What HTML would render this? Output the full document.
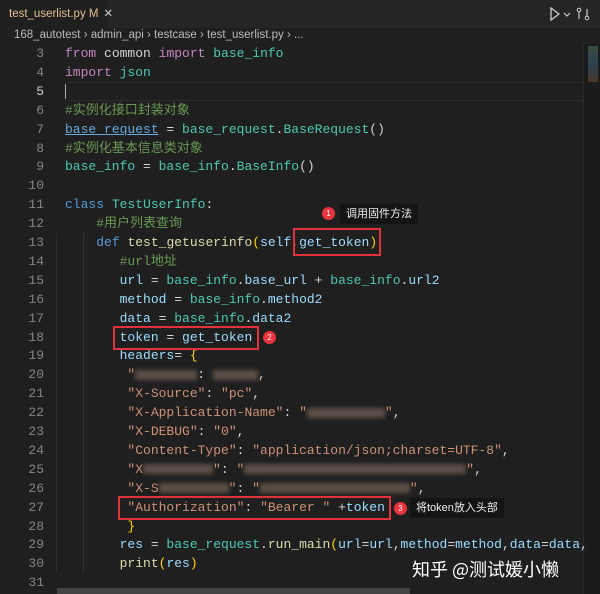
<!DOCTYPE html>
<html><head><meta charset="utf-8"><style>
*{margin:0;padding:0;box-sizing:border-box}
body{width:600px;height:594px;background:#1f1f1f;overflow:hidden;position:relative;font-family:"Liberation Sans","Noto Sans CJK SC",sans-serif}
.tabbar{position:absolute;left:0;top:0;width:600px;height:28px;background:#252526}
.tab{position:absolute;left:0;top:0;width:108px;height:28px;background:#1f1f1f;color:#e2c08d;font-size:11.5px;line-height:28px;padding-left:9px;white-space:nowrap}
.tab .x{color:#ccc;margin-left:5px}
.bc{position:absolute;left:14px;top:29px;color:#bbb;font-size:11.5px}
.code{position:absolute;left:0;top:44px;width:585px;font-family:"Liberation Mono","Noto Sans CJK SC",monospace;font-size:13px;color:#d4d4d4}
.l{position:absolute;left:0;height:19px;line-height:19px;white-space:pre;width:585px}
.n{position:absolute;left:0;width:44px;text-align:right;color:#858585}
.t{position:absolute;left:65px}
.k{color:#c586c0}.m{color:#4ec9b0}.v{color:#9cdcfe}.c{color:#6a9955}.s{color:#ce9178}.d{color:#569cd6}.f{color:#dcdcaa}.p{color:#ffd700}.w{color:#d4d4d4}
.box{position:absolute;border:2px solid #e0323a}
.badge{position:absolute;width:13px;height:13px;border-radius:50%;background:#e8343c;color:#fff;font-size:8px;text-align:center;line-height:13px}
.tip{position:absolute;background:#141414;color:#eee;font-size:11px;padding:0 6px;height:20px;line-height:20px}
.blur{display:inline-block;background:#6b5a50;filter:blur(2px);height:10px;vertical-align:middle;opacity:.8}
</style></head><body>
<div class="tabbar"><div class="tab">test_userlist.py M<span class="x">✕</span></div>
<svg style="position:absolute;left:548px;top:7px" width="44" height="14"><path d="M3 1 L11 7 L3 13 Z" fill="none" stroke="#ccc" stroke-width="1.3"/><path d="M16 6 l3 3 l3 -3" fill="none" stroke="#ccc" stroke-width="1.2"/><circle cx="31" cy="3" r="1.8" fill="none" stroke="#ccc"/><circle cx="39" cy="11" r="1.8" fill="none" stroke="#ccc"/><path d="M31 5 v7 M39 9 v-7" stroke="#ccc" stroke-width="1.2"/></svg></div>
<div class="bc">168_autotest › admin_api › testcase › test_userlist.py › ...</div>
<div style="position:absolute;left:65px;top:82px;width:520px;height:19px;border-top:1px solid #2c2c2c;border-bottom:1px solid #2c2c2c"></div>
<div style="position:absolute;left:65px;top:84px;width:1px;height:15px;background:#aeafad"></div>
<div style="position:absolute;left:583px;top:44px;width:17px;height:550px;background:#1b1b1b;border-left:1px solid #2a2a2a"></div>
<div style="position:absolute;left:588px;top:46px;width:10px;height:36px;background:linear-gradient(#4a6a5a,#3a5a70,#6a4a3a);opacity:.6"></div>
<div style="position:absolute;left:57px;top:588px;width:353px;height:6px;background:#424242"></div>
<div style="position:absolute;left:83px;top:233px;width:1px;height:340px;background:#333"></div>
<div style="position:absolute;left:56px;top:233px;width:1px;height:340px;background:#2d2d2d"></div>
<div class="code">
<div class="l" style="top:0"><span class="n">3</span><span class="t"><span class="k">from</span> common <span class="k">import</span> <span class="m">base_info</span></span></div>
<div class="l" style="top:18.9px"><span class="n">4</span><span class="t"><span class="k">import</span> <span class="m">json</span></span></div>
<div class="l" style="top:37.8px"><span class="n" style="color:#ccc">5</span></div>
<div class="l" style="top:56.7px"><span class="n">6</span><span class="t c">#实例化接口封装对象</span></div>
<div class="l" style="top:75.6px"><span class="n">7</span><span class="t"><span class="v" style="text-decoration:underline;color:#6aa8e0">base_request</span> = <span class="m">base_request</span>.<span class="m">BaseRequest</span>()</span></div>
<div class="l" style="top:94.5px"><span class="n">8</span><span class="t c">#实例化基本信息类对象</span></div>
<div class="l" style="top:113.4px"><span class="n">9</span><span class="t"><span class="m">base_info</span> = <span class="m">base_info</span>.<span class="m">BaseInfo</span>()</span></div>
<div class="l" style="top:132.3px"><span class="n">10</span></div>
<div class="l" style="top:151.2px"><span class="n">11</span><span class="t"><span class="d">class</span> <span class="m">TestUserInfo</span>:</span></div>
<div class="l" style="top:170.1px"><span class="n">12</span><span class="t c">    #用户列表查询</span></div>
<div class="l" style="top:189px"><span class="n">13</span><span class="t">    <span class="d">def</span> <span class="f">test_getuserinfo</span><span class="p">(</span><span class="v">self</span>,<span class="v">get_token</span><span class="p">)</span></span></div>
<div class="l" style="top:207.9px"><span class="n">14</span><span class="t c">       #url地址</span></div>
<div class="l" style="top:226.8px"><span class="n">15</span><span class="t">       <span class="v">url</span> = <span class="m">base_info</span>.<span class="v">base_url</span> + <span class="m">base_info</span>.<span class="v">url2</span></span></div>
<div class="l" style="top:245.7px"><span class="n">16</span><span class="t">       <span class="v">method</span> = <span class="m">base_info</span>.<span class="v">method2</span></span></div>
<div class="l" style="top:264.6px"><span class="n">17</span><span class="t">       <span class="v">data</span> = <span class="m">base_info</span>.<span class="v">data2</span></span></div>
<div class="l" style="top:283.5px"><span class="n">18</span><span class="t">       <span class="v">token</span> = <span class="v">get_token</span></span></div>
<div class="l" style="top:302.4px"><span class="n">19</span><span class="t">       <span class="v">headers</span>= <span class="p">{</span></span></div>
<div class="l" style="top:321.3px"><span class="n">20</span><span class="t">        <span class="s">"<span class="blur" style="width:62px"></span></span>: <span class="blur" style="width:45px"></span>,</span></div>
<div class="l" style="top:340.2px"><span class="n">21</span><span class="t">        <span class="s">"X-Source"</span>: <span class="s">"pc"</span>,</span></div>
<div class="l" style="top:359.1px"><span class="n">22</span><span class="t">        <span class="s">"X-Application-Name"</span>: <span class="s">"<span class="blur" style="width:78px"></span>"</span>,</span></div>
<div class="l" style="top:378px"><span class="n">23</span><span class="t">        <span class="s">"X-DEBUG"</span>: <span class="s">"0"</span>,</span></div>
<div class="l" style="top:396.9px"><span class="n">24</span><span class="t">        <span class="s">"Content-Type"</span>: <span class="s">"application/json;charset=UTF-8"</span>,</span></div>
<div class="l" style="top:415.8px"><span class="n">25</span><span class="t">        <span class="s">"X<span class="blur" style="width:70px"></span>"</span>: <span class="s">"<span class="blur" style="width:222px"></span>"</span>,</span></div>
<div class="l" style="top:434.7px"><span class="n">26</span><span class="t">        <span class="s">"X-S<span class="blur" style="width:70px"></span>"</span>: <span class="s">"<span class="blur" style="width:150px"></span>"</span>,</span></div>
<div class="l" style="top:453.6px"><span class="n">27</span><span class="t">        <span class="s">"Authorization"</span>: <span class="s">"Bearer "</span> +<span class="v">token</span></span></div>
<div class="l" style="top:472.5px"><span class="n">28</span><span class="t">        <span class="p">}</span></span></div>
<div class="l" style="top:491.4px"><span class="n">29</span><span class="t">       <span class="v">res</span> = <span class="m">base_request</span>.<span class="f">run_main</span><span class="p">(</span><span class="v">url</span>=<span class="v">url</span>,<span class="v">method</span>=<span class="v">method</span>,<span class="v">data</span>=<span class="v">data</span>,</span></div>
<div class="l" style="top:510.3px"><span class="n">30</span><span class="t">       <span class="f">print</span><span class="p">(</span><span class="v">res</span><span class="p">)</span></span></div>
<div class="l" style="top:529.2px"><span class="n">31</span></div>
</div>
<div class="box" style="left:293px;top:228px;width:88px;height:28px"></div>
<div class="badge" style="left:322px;top:207px">1</div>
<div class="tip" style="left:340px;top:204px">调用固件方法</div>
<div class="box" style="left:113px;top:326px;width:146px;height:24px"></div>
<div class="badge" style="left:263px;top:331px">2</div>
<div class="box" style="left:118px;top:496px;width:273px;height:24px"></div>
<div class="badge" style="left:394px;top:502px">3</div>
<div class="tip" style="left:410px;top:498px">将token放入头部</div>
<div style="position:absolute;left:412px;top:556px;color:#fff;font-size:18px;font-family:'Noto Sans CJK SC',sans-serif">知乎 @测试媛小懒</div>
</body></html>
